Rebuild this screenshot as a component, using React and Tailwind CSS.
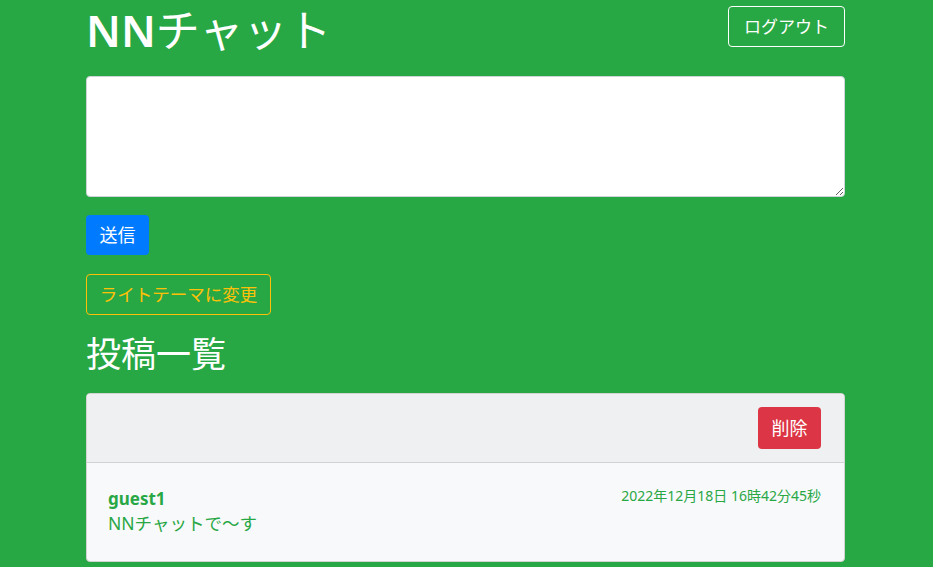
export default function App() {
  const font = { fontFamily: '"Noto Sans", "Noto Sans CJK JP", sans-serif' };
  return (
    <div className="min-h-[567px] bg-[#28a745] text-white" style={font}>
      <div className="ml-[86px] w-[759px]">
        <div className="flex h-[76px] items-start justify-between">
          <h1 className="mt-[4px] text-[44px] leading-[52px]">
            <span className="font-semibold">NN</span>
            <span className="font-normal">チャット</span>
          </h1>
          <button className="mt-[6px] h-[41px] w-[117px] rounded-[4px] border border-white text-[17px] text-white">ログアウト</button>
        </div>
        <textarea className="block h-[121px] w-full rounded-[4px] border border-[#ced4da] bg-white px-3 py-1.5 text-black" />
        <button className="mt-[18px] block h-[40px] w-[63px] rounded-[4px] bg-[#007bff] text-[18px] text-white">送信</button>
        <button className="mt-[19px] block h-[41px] w-[185px] rounded-[4px] border border-[#ffc107] text-[17.5px] text-[#ffc107]">ライトテーマに変更</button>
        <h2 className="mt-[18px] text-[35px] leading-[42px] font-normal">投稿一覧</h2>
        <div className="mt-[18px] overflow-hidden rounded-[4px] border border-[#d3d3d3] bg-[#f8f9fa]">
          <div className="flex h-[69px] items-center justify-end border-b border-[#d3d3d3] bg-[#eff0f2] px-[23px]">
            <button className="h-[42px] w-[63px] rounded-[4px] bg-[#dc3545] text-[18px] text-white">削除</button>
          </div>
          <div className="flex items-start justify-between pl-[21px] pr-[23px] pt-[23px] pb-[25px]">
            <div>
              <div className="text-[17px] font-bold leading-[25px] text-[#28a745]">guest1</div>
              <div className="text-[17.5px] leading-[25px] text-[#28a745]">NNチャットで～す</div>
            </div>
            <div className="pt-0 text-[14px] leading-[20px] text-[#28a745]">2022年12月18日 16時42分45秒</div>
          </div>
        </div>
      </div>
    </div>
  );
}
